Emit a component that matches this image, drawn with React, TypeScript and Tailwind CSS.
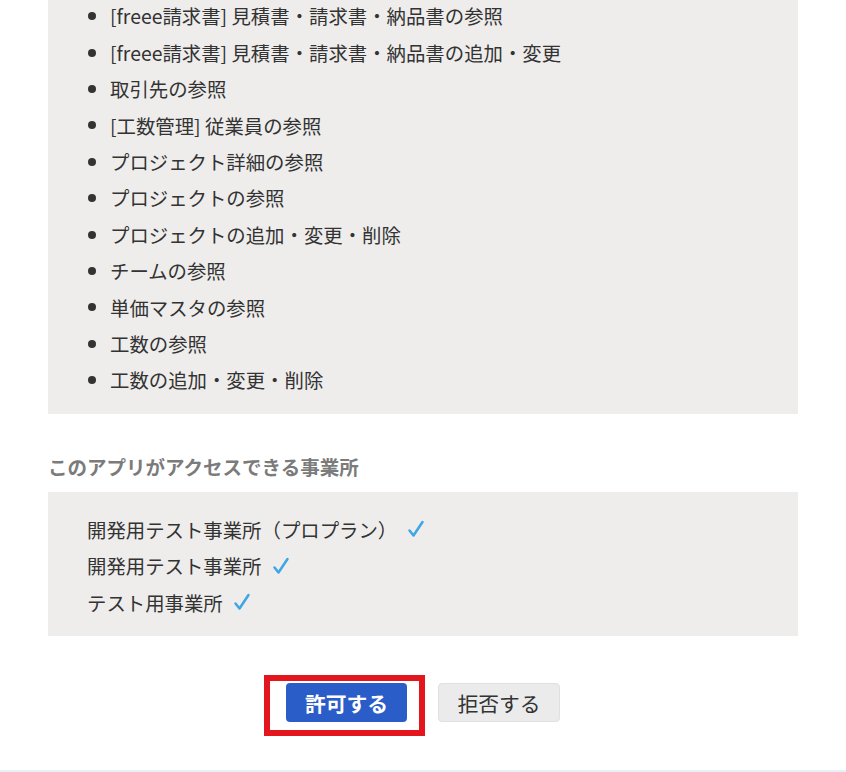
import React from "react";

const perms = [
  "[freee請求書] 見積書・請求書・納品書の参照",
  "[freee請求書] 見積書・請求書・納品書の追加・変更",
  "取引先の参照",
  "[工数管理] 従業員の参照",
  "プロジェクト詳細の参照",
  "プロジェクトの参照",
  "プロジェクトの追加・変更・削除",
  "チームの参照",
  "単価マスタの参照",
  "工数の参照",
  "工数の追加・変更・削除",
];

const offices = ["開発用テスト事業所（プロプラン）", "開発用テスト事業所", "テスト用事業所"];

function Check() {
  return (
    <svg width="18" height="18" viewBox="0 0 18 18" className="ml-[10px] shrink-0">
      <path d="M2.5 10.5 L6.5 15.5 L15.5 2" fill="none" stroke="#3ea6e4" strokeWidth="2.5" strokeLinecap="round" strokeLinejoin="round" />
    </svg>
  );
}

export default function App() {
  return (
    <div
      className="relative w-[846px] h-[772px] overflow-hidden bg-white text-[#333]"
      style={{ fontFamily: '"Noto Sans CJK JP", "Noto Sans", sans-serif' }}
    >
      <div className="px-12 -mt-[2px]">
        <div className="bg-[#eeedec] pb-4">
          <ul className="pl-10">
            {perms.map((p) => (
              <li key={p} className="flex items-center h-[36.4px] text-[19.4px]">
                <span className="w-[8px] h-[8px] rounded-full bg-[#333] mr-[14px] shrink-0" />
                <span className="leading-none">{p}</span>
              </li>
            ))}
          </ul>
        </div>
        <h2 className="mt-[35px] mb-[7px] leading-[36px] text-[19.5px] font-bold text-[#7b7b7b]">
          このアプリがアクセスできる事業所
        </h2>
        <div className="bg-[#eeedec] pt-[19px] pb-4 pl-[39px]">
          {offices.map((o) => (
            <div key={o} className="flex items-center h-[36.4px] text-[19.4px]">
              <span className="leading-none">{o}</span>
              <Check />
            </div>
          ))}
        </div>
        <div className="mt-[47px] flex justify-center gap-[31px]">
          <div className="relative">
            <button className="w-[121px] h-[39px] rounded-[4px] bg-[#2b5dc9] text-white font-bold text-[20.8px] leading-none">
              許可する
            </button>
            <div className="absolute -left-[22px] -top-[8px] w-[161px] h-[61px] border-[6px] border-[#e3161d] pointer-events-none" />
          </div>
          <button className="w-[122px] h-[39px] rounded-[4px] bg-[#ebebeb] border border-[#e0e0e0] text-[#333] text-[20.8px] leading-none">
            拒否する
          </button>
        </div>
      </div>
      <div className="absolute left-0 right-0 top-[770px] h-[2px] bg-[#e8f1fb]" />
    </div>
  );
}
